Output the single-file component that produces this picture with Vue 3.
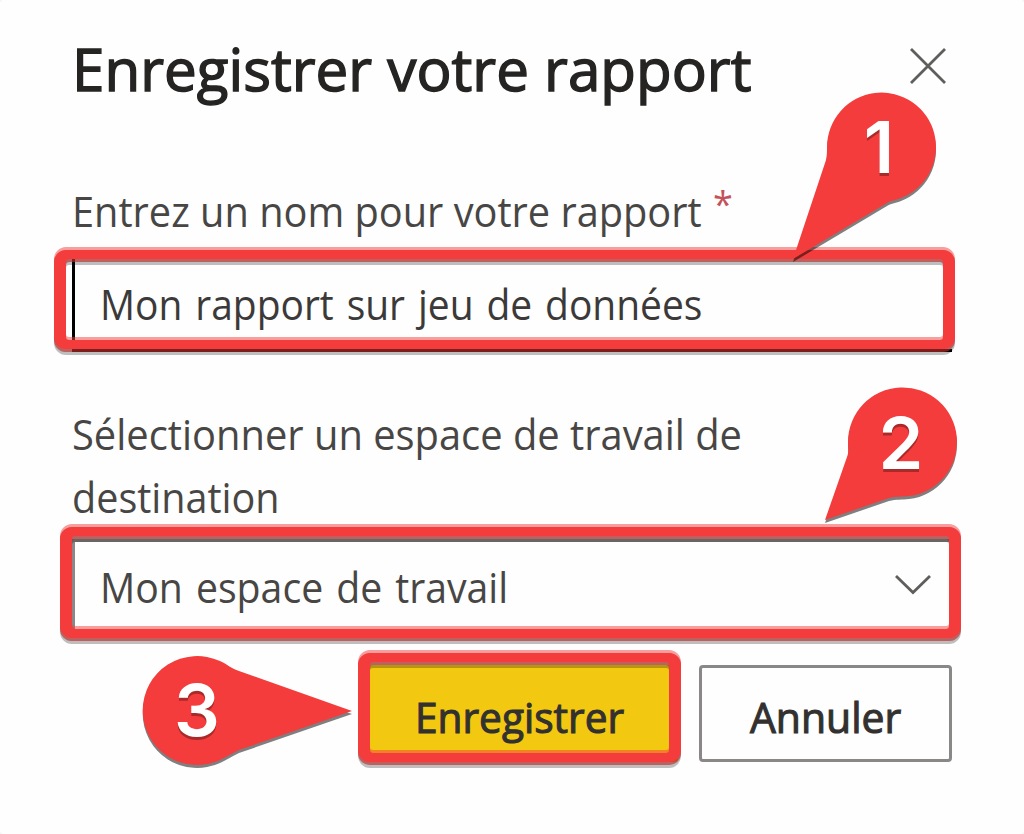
<script setup>
// Scales a line of text horizontally so that it takes the given width.
const vFit = {
  mounted(el, { value }) {
    el.style.transform = `scaleX(${value / el.offsetWidth})`
  },
}

const rounded = (x1, y1, x2, y2, r) =>
  `M${x1 + r} ${y1}H${x2 - r}A${r} ${r} 0 0 1 ${x2} ${y1 + r}V${y2 - r}A${r} ${r} 0 0 1 ${x2 - r} ${y2}H${x1 + r}A${r} ${r} 0 0 1 ${x1} ${y2 - r}V${y1 + r}A${r} ${r} 0 0 1 ${x1 + r} ${y1}Z`

const ring = ({ x1, y1, x2, y2 }, dy, inset) =>
  rounded(x1, y1 + dy + inset, x2, y2 + dy - inset, 12) +
  rounded(x1 + 12, y1 + dy + 15 - inset, x2 - 12, y2 + dy - 15 + inset, 3)

const frames = [
  { x1: 54, y1: 247, x2: 955, y2: 352 },
  { x1: 60, y1: 524, x2: 961, y2: 641 },
  { x1: 358, y1: 650, x2: 681, y2: 765 },
]

const pins = [
  { n: 1, x: 879, y: 173, d: 'M793 259L826 160C827 156 827 153 827 147A54.5 54.5 0 1 1 901 198C896 200 892 200 887 203Z' },
  { n: 2, x: 901, y: 469, d: 'M825 520L847 457C849 452 848 448 848 442A54.5 54.5 0 1 1 909 496C902 497 896 496 889 498Z' },
  { n: 3, x: 197, y: 736, d: 'M352 711L239 671C232 669 227 664 220 661A54.5 54.5 0 1 0 220 760C227 757 232 753 239 750Z' },
]
</script>

<template>
  <main class="page">
    <section class="dialog">
      <header class="head">
        <h1><span v-fit="679" class="fit">Enregistrer votre rapport</span></h1>
        <svg class="close" width="38" height="38" viewBox="0 0 38 38"><path d="M2 2L36 36M36 2L2 36" /></svg>
      </header>

      <div class="field">
        <label class="label"><span v-fit="630" class="fit">Entrez un nom pour votre rapport</span><span class="star">*</span></label>
        <div class="box input"><span v-fit="602" class="fit">Mon rapport sur jeu de données</span></div>
      </div>

      <div class="field second">
        <label class="label">
          <span v-fit="670" class="fit">Sélectionner un espace de travail de</span><br />
          <span v-fit="208" class="fit">destination</span>
        </label>
        <div class="box select">
          <span v-fit="408" class="fit">Mon espace de travail</span>
          <svg class="chevron" width="38" height="22" viewBox="0 0 38 22"><path d="M2 2L19 18.500L36 2" /></svg>
        </div>
      </div>

      <footer class="actions">
        <button class="btn primary"><span v-fit="209" class="fit">Enregistrer</span></button>
        <button class="btn"><span v-fit="151" class="fit">Annuler</span></button>
      </footer>
    </section>

    <svg class="marks" width="1024" height="834" viewBox="0 0 1024 834">
      <g v-for="(f, i) in frames" :key="i" fill-rule="evenodd">
        <path :d="ring(f, 3, 0)" fill="#000" opacity=".25" />
        <path :d="ring(f, 3, 3)" fill="#000" opacity=".3" />
        <path :d="ring(f, 0, 0)" fill="#f43c3c" opacity=".5" />
        <path :d="ring(f, 0, 3)" fill="#f43c3c" />
      </g>
      <g v-for="p in pins" :key="p.n">
        <path :d="p.d" class="pin-shadow" transform="translate(0 3)" />
        <path :d="p.d" class="pin" />
        <text :x="p.x" :y="p.y" class="digit">{{ p.n }}</text>
      </g>
    </svg>
  </main>
</template>

<style>
body {
  background: #f4f4f4;
}
</style>

<style scoped>
.page {
  position: relative;
  width: 1024px;
  height: 834px;
  overflow: hidden;
  font-family: "Open Sans", "Noto Sans", sans-serif;
  color: #484644;
}
.dialog {
  box-sizing: border-box;
  width: 1024px;
  height: 834px;
  padding: 38px 73px 0 72px;
  background: #fefefe;
  border-radius: 4px;
}
.fit {
  display: inline-block;
  white-space: nowrap;
  transform-origin: 0 50%;
}
.head {
  display: flex;
  justify-content: space-between;
  height: 141px;
  padding-right: 4px;
}
h1 {
  width: 700px;
  margin: 0;
  font-size: 58.5px;
  font-weight: 400;
  -webkit-text-stroke: 1.4px #252423;
  line-height: 60px;
  color: #252423;
}
.close {
  flex: none;
  margin-top: 9px;
}
.close path,
.chevron path {
  fill: none;
  stroke: #605e5c;
  stroke-width: 2.8;
}
.field {
  height: 173px;
}
.label {
  display: block;
  position: relative;
  height: 63px;
  font-size: 42px;
  line-height: 63px;
}
.star {
  position: absolute;
  left: 641px;
  top: -7px;
  font-size: 36px;
  line-height: 63px;
  color: #c4525a;
}
.box {
  display: flex;
  box-sizing: border-box;
  width: 880px;
  height: 93px;
  margin-top: 17px;
  padding-left: 25px;
  font-size: 42px;
  word-spacing: 3px;
}
.input {
  border: solid #000;
  border-width: 0 0 3px 3px;
  line-height: 90px;
  color: #3b3a39;
}
.second {
  margin-top: 50px;
  height: 230px;
}
.second .label {
  height: 126px;
}
.select {
  justify-content: space-between;
  margin-top: 11px;
  border: 3px solid #8a8886;
  line-height: 90px;
}
.chevron {
  flex: none;
  margin: 32px 17px 0 0;
}
.actions {
  display: flex;
  justify-content: flex-end;
  gap: 21px;
  margin: 33px -1px 0 0;
}
.btn {
  box-sizing: border-box;
  display: flex;
  justify-content: flex-start;
  align-items: flex-start;
  width: 253px;
  height: 97px;
  padding: 0 0 0 48px;
  border: 3px solid #8a8886;
  border-radius: 4px;
  background: #fefefe;
  font: 400 42px/97px "Open Sans", "Noto Sans", sans-serif;
  -webkit-text-stroke: 1.1px #323130;
  color: #323130;
}
.primary {
  width: 309px;
  padding-left: 43px;
  border-color: #f2c811;
  background: #f2c811;
}
.marks {
  position: absolute;
  left: 0;
  top: 0;
}
.pin {
  fill: #f43c3c;
}
.pin-shadow {
  fill: #000;
  opacity: 0.5;
}
.digit {
  font: 600 72px Inter, sans-serif;
  text-anchor: middle;
  fill: #fff;
  text-shadow: 0 3px 0 rgba(0, 0, 0, 0.3);
}
</style>
